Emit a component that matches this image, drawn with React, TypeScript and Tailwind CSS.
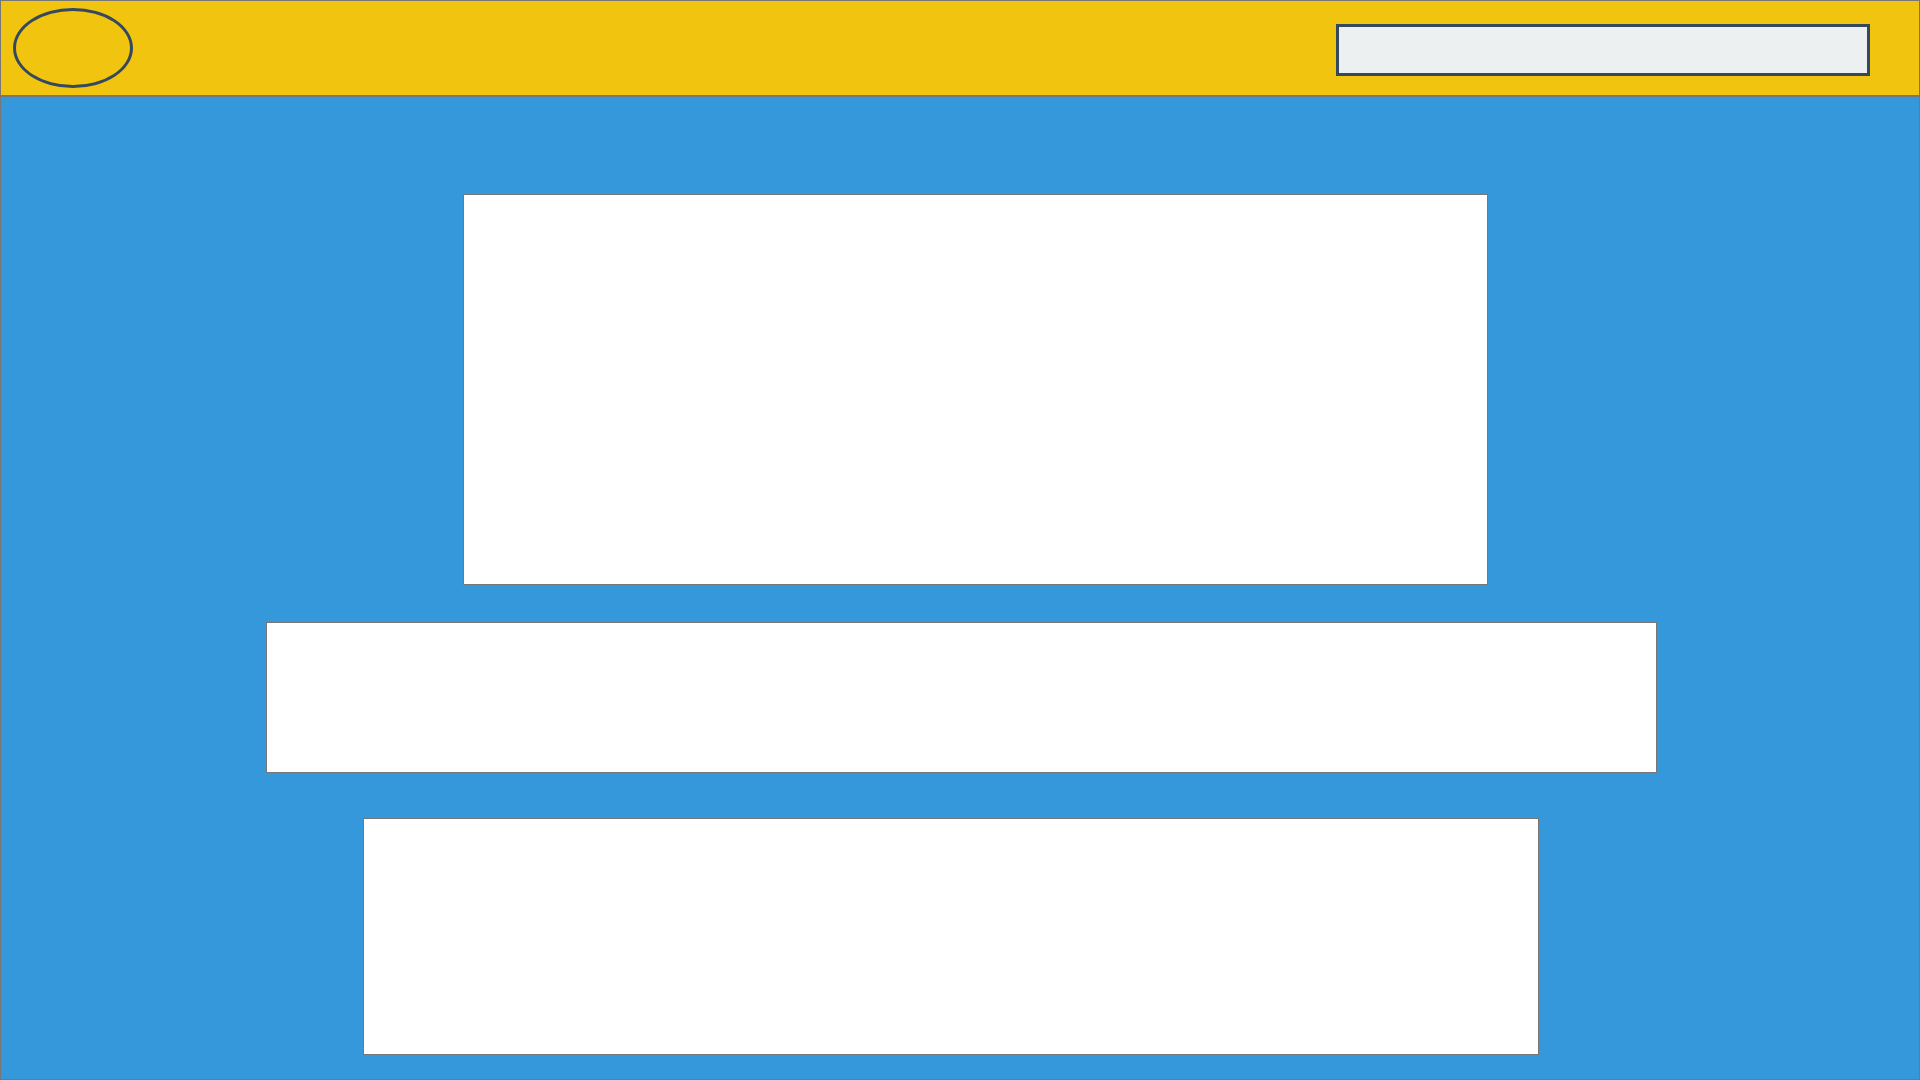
export default function App() {
  return (
    <div className="w-[1920px] h-[1080px] border border-[#777777] bg-[#3498db] flex flex-col overflow-hidden">
      <header className="h-[96px] shrink-0 bg-[#f1c40f] border-b-2 border-[#777777] flex items-start justify-between pl-[12px] pr-[49px]">
        <div className="mt-[7px] w-[120px] h-[80px] rounded-[50%] border-[3px] border-[#34495e]" />
        <div className="mt-[23px] w-[534px] h-[52px] bg-[#ecf0f1] border-[3px] border-[#34495e]" />
      </header>
      <main className="flex flex-col items-start pt-[97px]">
        <section className="ml-[462px] w-[1025px] h-[391px] bg-white border border-[#777777]" />
        <section className="ml-[265px] mt-[37px] w-[1391px] h-[151px] bg-white border border-[#777777]" />
        <section className="ml-[362px] mt-[45px] w-[1176px] h-[237px] bg-white border border-[#777777]" />
      </main>
    </div>
  );
}
